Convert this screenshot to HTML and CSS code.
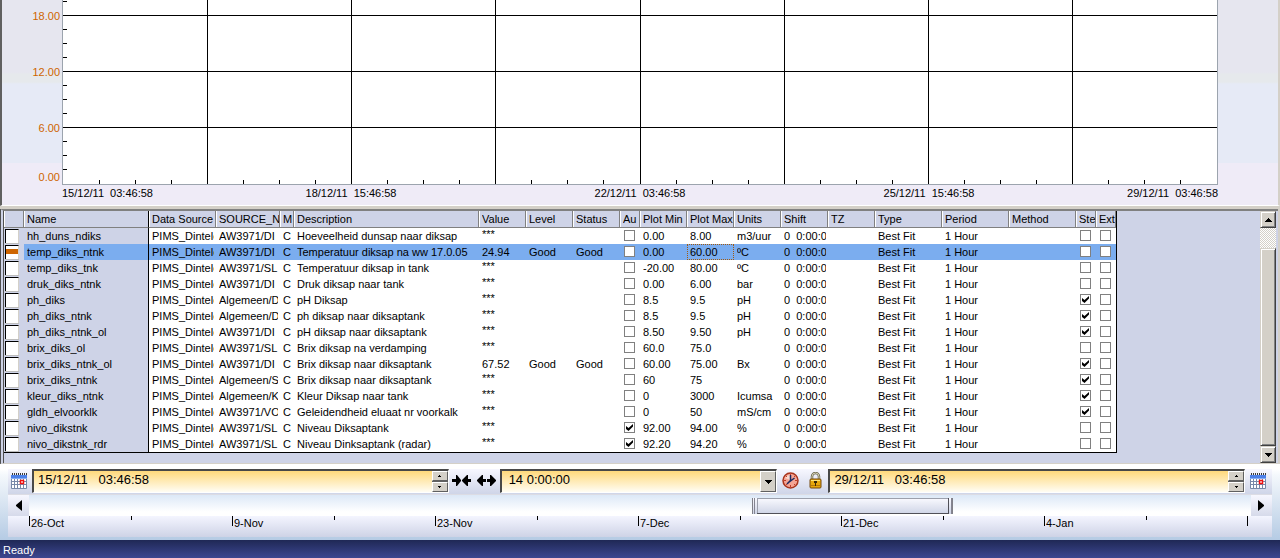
FILE: index.html
```
<!DOCTYPE html>
<html lang="en">
<head>
<meta charset="utf-8">
<title>Trend viewer</title>
<link rel="stylesheet" href="styles.css">
</head>
<body>
<main class="window">
  <section class="chart" aria-label="Trend chart">
    <div class="y-axis"><span>18.00</span><span>12.00</span><span>6.00</span><span>0.00</span></div>
    <svg class="plot" id="plot" aria-hidden="true" shape-rendering="crispEdges"></svg>
    <div class="x-axis"><span>15/12/11  03:46:58</span><span>18/12/11  15:46:58</span><span>22/12/11  03:46:58</span><span>25/12/11  15:46:58</span><span>29/12/11  03:46:58</span></div>
  </section>

  <section class="tags" aria-label="Tags">
    <div class="grid-area">
      <table class="grid">
        <colgroup id="cols"></colgroup>
        <thead><tr id="head"></tr></thead>
        <tbody id="rows"></tbody>
      </table>
    </div>
    <div class="scrollbar">
      <button class="sb-button" aria-label="Scroll up"><svg width="7" height="4"><path d="M3 0h1v1h1v1h1v1h1v1H0V3h1V2h1V1h1z"/></svg></button>
      <div class="sb-track"><div class="sb-thumb"></div></div>
      <button class="sb-button" aria-label="Scroll down"><svg width="7" height="4"><path d="M0 0h7v1H6v1H5v1H4v1H3V3H2V2H1V1H0z"/></svg></button>
    </div>
  </section>

  <section class="time">
    <div class="time-bar">
      <button class="tool" aria-label="Pick start date"><svg class="icon" width="16" height="16" viewBox="0 0 16 16"><use href="#calendar"/></svg></button>
      <div class="field date">
        <input type="text" aria-label="Start time" value="15/12/11   03:46:58">
        <div class="spin"><button aria-label="Later start"><svg width="3" height="2"><path d="M1 0h1v1h1v1H0V1h1z"/></svg></button><button aria-label="Earlier start"><svg width="3" height="2"><path d="M0 0h3v1H2v1H1V1H0z"/></svg></button></div>
      </div>
      <div class="tool-pair">
        <button class="tool" aria-label="Zoom in"><svg width="19" height="11" viewBox="0 0 19 11"><path d="M0 4h4V0h1l4 5v1l-4 5H4V7H0zM19 4h-3V0h-1l-5 5v1l5 5h1V7h3z"/></svg></button>
        <button class="tool" aria-label="Zoom out"><svg width="19" height="11" viewBox="0 0 19 11"><path d="M9 4H6V0H5L0 5v1l5 5h1V7h3zM10 4h3V0h1l5 5v1l-5 5h-1V7h-3z"/></svg></button>
      </div>
      <div class="field span">
        <select aria-label="Time span"><option>14  0:00:00</option></select>
        <span class="drop" aria-hidden="true"><svg width="7" height="4"><path d="M0 0h7v1H6v1H5v1H4v1H3V3H2V2H1V1H0z"/></svg></span>
      </div>
      <div class="tool-pair">
        <button class="tool" aria-label="Set to now"><svg width="17" height="17" viewBox="0 0 17 17"><circle cx="8.500" cy="8.500" r="7.500" fill="#f4a494" stroke="#a8341c" stroke-width="1.500"/><path d="M3 6a6 6 0 0 1 5-3v5z" fill="#fbd8cc"/><path d="M8.500 2v2M8.500 13v2M2 8.500h2M13 8.500h2M4 4l1 1M13 4l-1 1M4 13l1-1M13 13l-1-1" stroke="#c03c28"/><path d="M8.500 3v6l4-3M8.500 8.500L5 12" fill="none" stroke="#1c2a60" stroke-width="1.500"/></svg></button>
        <button class="tool" aria-label="Lock"><svg width="13" height="17" viewBox="0 0 13 17"><path d="M3 8V4.500a3.500 3.500 0 0 1 7 0V8" fill="none" stroke="#6c6850" stroke-width="2.500"/><path d="M3 8V4.500a3.500 3.500 0 0 1 7 0V8" fill="none" stroke="#d8d4b8"/><rect x="1" y="7" width="11" height="9" rx="1" fill="#e8a80c" stroke="#74480c"/><path d="M2 8.500h9" stroke="#ffe478"/><path d="M2 13.500h9" stroke="#b87808"/><path d="M5 9h3v2H7v3H6v-3H5z" fill="#382808"/></svg></button>
      </div>
      <div class="field date">
        <input type="text" aria-label="End time" value="29/12/11   03:46:58">
        <div class="spin"><button aria-label="Later end"><svg width="3" height="2"><path d="M1 0h1v1h1v1H0V1h1z"/></svg></button><button aria-label="Earlier end"><svg width="3" height="2"><path d="M0 0h3v1H2v1H1V1H0z"/></svg></button></div>
      </div>
      <button class="tool last" aria-label="Pick end date"><svg class="icon" width="16" height="16" viewBox="0 0 16 16"><use href="#calendar"/></svg></button>
    </div>
    <div class="range-bar">
      <button class="tool" aria-label="Move back"><svg width="7" height="11"><path d="M7 0v11L1 6V5z"/></svg></button>
      <input class="range" type="range" min="0" max="1000" value="708" aria-label="Visible period">
      <button class="tool" aria-label="Move forward"><svg width="7" height="11"><path d="M0 0v11l6-5V5z"/></svg></button>
    </div>
    <div class="ruler" id="ruler"></div>
  </section>
  <footer class="status">Ready</footer>
</main>

<svg class="defs" aria-hidden="true">
  <symbol id="calendar" viewBox="0 0 16 16">
    <rect x="1" y="2" width="14" height="13" fill="#fff"/>
    <rect y="2" width="16" height="4" fill="#4c80e8"/><rect y="5" width="16" height="1" fill="#84acf4"/>
    <path d="M1 0h1v2H1zM3 0h1v2H3zM5 0h1v2H5zM7 0h1v2H7zM9 0h1v2H9zM11 0h1v2h-1zM13 0h1v2h-1zM15 0h1v2h-1z" fill="#383838"/>
    <path d="M.5 6v9.500h15V6M3.500 6v9M6.500 6v9M9.500 6v9M12.500 6v9M0 8.500h16M0 11.500h16" fill="none" stroke="#7888a8"/>
    <rect x="9.500" y="7.500" width="3" height="3" fill="#fff" stroke="#f01010" stroke-width="1.500"/>
  </symbol>
</svg>
<script src="app.js"></script>
</body>
</html>
```
FILE: styles.css
```
* { box-sizing: border-box; }
body { margin: 0; background: #d4d0c8; color: #000; font: 11px/14px "Liberation Sans", Arial, sans-serif; }
button { margin: 0; padding: 0; border: 0; background: none; display: flex; align-items: center; justify-content: center; font: inherit; color: inherit; }
input, select { font: inherit; color: inherit; margin: 0; }
.defs { position: absolute; width: 0; height: 0; }
.window { display: flex; flex-direction: column; min-height: 100vh; }

/* Chart */
.chart {
  display: grid; grid-template-columns: 60px 1fr; padding: 0 60px 5px 0;
  border-left: 2px solid #606060; border-right: 2px solid #d4d0c8; border-bottom: 1px solid #fff;
  background: linear-gradient(#e6e6ef 72px, #e6e9ec 74px 82px, #e6eaf6 84px 163px, #efebf7 163px);
}
.y-axis { display: flex; flex-direction: column; gap: 42px; padding: 9px 2px 0 0; height: 184px; text-align: right; color: #ce6500; }
.y-axis span:last-child { margin-top: -7px; }
.plot { display: block; width: 100%; height: 185px; background: #fff; border: solid #9ca4ae; border-width: 0 1px 1px; }
.plot line { stroke: #000; stroke-width: 1px; }
.x-axis { grid-column: 2; display: grid; grid-template-columns: repeat(8, 1fr); white-space: pre; padding-top: 1px; }
.x-axis span { grid-column: span 2; text-align: center; }
.x-axis span:first-child { grid-column: span 1; text-align: left; }
.x-axis span:last-child { grid-column: span 1; justify-self: end; }

/* Tag table */
.tags {
  display: flex; flex: 1; margin: 3px 2px 0 0;
  border: solid #808080; border-width: 2px 0 1px 4px; border-left: 4px double #505050; border-bottom-color: #d4d0c8;
  background: #ced3e7;
}
.grid-area { flex: 1; min-width: 0; overflow: hidden; padding-bottom: 10px; }
.grid { border-collapse: separate; border-spacing: 0; table-layout: fixed; width: 1113px; border-right: 1px solid #000; border-bottom: 1px solid #000; background: #fff; }
.grid td, .grid th { padding: 0; height: 16px; text-align: left; font-weight: normal; line-height: 16px; }
.grid th { height: 17px; background: #ced3e7; border: solid #808080; border-width: 0 1px 1px 0; box-shadow: inset 1px 0 #fff; }
.grid .name { background: #ced3e7; border-right: 1px solid #000; }
.grid td.swatch-cell { background: #ced3e7; }
.cell { display: block; height: 16px; margin: 0 2px 0 3px; overflow: hidden; white-space: pre; }
th .cell { margin-right: 0; }
.selected td, .grid .selected .name { background: #7badef; }
.grid .selected .swatch-cell { background: #ced3e7; }
.stars { line-height: 12px; }
.focus { outline: 1px dotted #a05a10; outline-offset: -1px; }
.swatch { display: block; width: 14px; height: 14px; margin-left: 1px; background: #fff; border: solid #000; border-width: 1px 1px 0 1px; border-right-color: #d4d0c8; box-shadow: 0 1px #bdbdbd; }
.selected .swatch { background: linear-gradient(#fff 3px, #ce6500 3px 8px, #fff 8px); }
.check { display: block; appearance: none; width: 11px; height: 11px; margin: 0 0 1px 4px; border: 1px solid #808080; background: #fff; }
.check:checked::before { content: ""; display: block; width: 7px; height: 7px; margin: 1px; background: #000; clip-path: polygon(0 30%, 36% 58%, 100% 0, 100% 36%, 36% 100%, 0 70%); }

.scrollbar { display: flex; flex-direction: column; width: 16px; margin-right: 2px; }
.sb-button, .sb-thumb { background: #d4d0c8; border: 1px solid #404040; border-top-color: #d4d0c8; border-left-color: #d4d0c8; box-shadow: inset 1px 1px #fff, inset -1px -1px #808080; }
.sb-button { height: 17px; }
.sb-track { flex: 1; display: flex; flex-direction: column; padding-top: 20px; background: repeating-conic-gradient(#fff 0 25%, #d4d0c8 0 50%) 0 0 / 2px 2px; }
.sb-thumb { flex: 1; }

/* Time controls */
.time { border-top: 1px solid #fff; padding: 4px 8px 3px; background: linear-gradient(#fff 0 4px, #f4f8fc 10px, #b5cbe4); }
.time-bar { display: flex; height: 25px; background: linear-gradient(#f7f7ff, #cfd5e8); }
.tool { flex: none; width: 24px; padding: 0 2px 2px 0; }
.tool.last { width: 27px; }
.tool-pair { display: flex; width: 51px; justify-content: space-around; flex: none; }
.tool-pair .tool { padding-right: 0; }
.field { position: relative; display: flex; min-width: 0; height: 24px; border: 2px solid #484848; border-width: 2px 1px 1px 2px; border-right-color: #fff; border-bottom-color: #fff; background: linear-gradient(#ffd97b, #fffdf4); }
.field.date { flex: 417 1 0; }
.field.span { flex: 277 1 0; }
.field input, .field select { flex: 1; min-width: 0; border: 0; border-radius: 0; padding: 0 4px 3px; background: none; appearance: none; outline: 0; font-size: 13px; line-height: 18px; white-space: pre; }
.field select { padding-left: 7px; }
.spin { display: flex; flex-direction: column; width: 16px; gap: 1px; background: #606060; }
.spin button, .drop { flex: 1; background: #d4d0c8; border: 1px solid #606060; border-top-color: #fff; border-left-color: #fff; }
.drop { position: absolute; top: 0; right: 0; bottom: 0; width: 16px; display: flex; align-items: center; justify-content: center; pointer-events: none; }
.range-bar { display: flex; height: 22px; background: linear-gradient(#dce8f7, #fff 80%); border-top: 1px solid #dcdce4; }
.range-bar .tool { width: 21px; padding: 0; background: linear-gradient(#f7f7ff, #d6daea); }
.range { flex: 1; min-width: 0; height: 21px; appearance: none; background: none; outline: 0; }
.range::-webkit-slider-thumb {
  appearance: none; width: 201px; height: 16px; border: solid #808088; border-width: 0 1px;
  background:
    linear-gradient(#848490, #848490) 1px 0 / 1px 100% no-repeat,
    linear-gradient(#505058, #505058) right 3px top 0 / 1px 100% no-repeat,
    linear-gradient(#848490, #848490) right 0 top 0 / 1px 100% no-repeat,
    linear-gradient(#505058, #505058) 4px 100% / 192px 1px no-repeat,
    linear-gradient(#9ca0ac, #9ca0ac) 4px 0 / 192px 1px no-repeat,
    linear-gradient(#9ca0ac, #9ca0ac) 4px 0 / 1px 100% no-repeat,
    linear-gradient(#fafaff, #ced4e6);
}
.ruler { display: flex; height: 21px; padding: 0 24px 0 21px; background: linear-gradient(#f4f5ff, #ced3e6); }
.ruler span { flex: 1; min-width: 0; height: 4px; border-left: 1px solid #000; }
.ruler .major { height: 10px; padding: 0 0 0 1px; }
.ruler .end { flex: none; width: 1px; padding: 0; }
.status { height: 19px; padding: 3px 3px 2px; color: #fff; background: linear-gradient(#1f2855, #3e4894); }
```
FILE: app.js
```
const columns = [
  ["", 20], ["Name", 125], ["Data Source", 67], ["SOURCE_N", 64], ["M", 14], ["Description", 185],
  ["Value", 47], ["Level", 47], ["Status", 47], ["Au", 20], ["Plot Min", 47], ["Plot Max", 47],
  ["Units", 47], ["Shift", 47], ["TZ", 47], ["Type", 67], ["Period", 67], ["Method", 67], ["Ste", 20], ["Ext", 20]
];

// name, source, description, value, quality, auto, min, max, units, stepped
const tags = [
  ["hh_duns_ndiks", "AW3971/DI", "Hoeveelheid dunsap naar diksap", "", "", 0, "0.00", "8.00", "m3/uur", 0],
  ["temp_diks_ntnk", "AW3971/DI", "Temperatuur diksap na ww 17.0.05", "24.94", "Good", 0, "0.00", "60.00", "ºC", 0],
  ["temp_diks_tnk", "AW3971/SL", "Temperatuur diksap in tank", "", "", 0, "-20.00", "80.00", "ºC", 0],
  ["druk_diks_ntnk", "AW3971/DI", "Druk diksap naar tank", "", "", 0, "0.00", "6.00", "bar", 0],
  ["ph_diks", "Algemeen/D", "pH Diksap", "", "", 0, "8.5", "9.5", "pH", 1],
  ["ph_diks_ntnk", "Algemeen/D", "ph diksap naar diksaptank", "", "", 0, "8.5", "9.5", "pH", 1],
  ["ph_diks_ntnk_ol", "AW3971/DI", "pH diksap naar diksaptank", "", "", 0, "8.50", "9.50", "pH", 1],
  ["brix_diks_ol", "AW3971/SL", "Brix diksap na verdamping", "", "", 0, "60.0", "75.0", "", 0],
  ["brix_diks_ntnk_ol", "AW3971/DI", "Brix diksap naar diksaptank", "67.52", "Good", 0, "60.00", "75.00", "Bx", 1],
  ["brix_diks_ntnk", "Algemeen/S", "Brix diksap naar diksaptank", "", "", 0, "60", "75", "", 1],
  ["kleur_diks_ntnk", "Algemeen/K", "Kleur Diksap naar tank", "", "", 0, "0", "3000", "Icumsa", 1],
  ["gldh_elvoorklk", "AW3971/VO", "Geleidendheid eluaat nr voorkalk", "", "", 0, "0", "50", "mS/cm", 1],
  ["nivo_dikstnk", "AW3971/SL", "Niveau Diksaptank", "", "", 1, "92.00", "94.00", "%", 0],
  ["nivo_dikstnk_rdr", "AW3971/SL", "Niveau Dinksaptank (radar)", "", "", 1, "92.20", "94.20", "%", 0]
];

const td = (text, cls = "") => `<td><span class="cell ${cls}">${text}</span></td>`;
const check = (on, label) => `<td><input class="check" type="checkbox" aria-label="${label}"${on ? " checked" : ""}></td>`;
const byId = id => document.getElementById(id);

byId("cols").innerHTML = columns.map(c => `<col style="width:${c[1]}px">`).join("");
byId("head").innerHTML = columns.map(c => `<th class="${c[0] === "Name" ? "name" : ""}"><span class="cell">${c[0]}</span></th>`).join("");
byId("rows").innerHTML = tags.map((t, i) => {
  const [name, source, text, value, quality, auto, min, max, units, stepped] = t;
  const selected = i === 1;
  return `<tr class="${selected ? "selected" : ""}"><td class="swatch-cell"><span class="swatch"></span></td>` +
    `<td class="name"><span class="cell">${name}</span></td>` +
    td("PIMS_Dintelo") + td(source) + td("C") + td(text) + td(value || "***", value ? "" : "stars") +
    td(quality) + td(quality) + check(auto, "Auto " + name) + td(min) +
    `<td class="${selected ? "focus" : ""}"><span class="cell">${max}</span></td>` +
    td(units) + td("0  0:00:0") + td("") + td("Best Fit") + td("1 Hour") + td("") +
    check(stepped, "Stepped " + name) + check(0, "Extrapolate " + name) + "</tr>";
}).join("");

// Grid lines and minor ticks of the plot
let lines = "";
for (let i = 1; i < 32; i++) {
  const x = i * 3.125 + "%";
  lines += `<line x1="${x}" x2="${x}" y1="${i % 4 ? 180 : 0}" y2="184"/>`;
}
for (let i = 0; i < 13; i++) {
  const y = 1.5 + i * 14;
  lines += `<line x1="0" x2="${i % 4 === 1 ? "100%" : 4}" y1="${y}" y2="${y}"/>`;
}
byId("plot").innerHTML = lines;

const dates = ["26-Oct", "9-Nov", "23-Nov", "7-Dec", "21-Dec", "4-Jan"];
byId("ruler").innerHTML = dates.map(d => `<span class="major">${d}</span><span></span>`).join("") + '<span class="major end"></span>';
```
